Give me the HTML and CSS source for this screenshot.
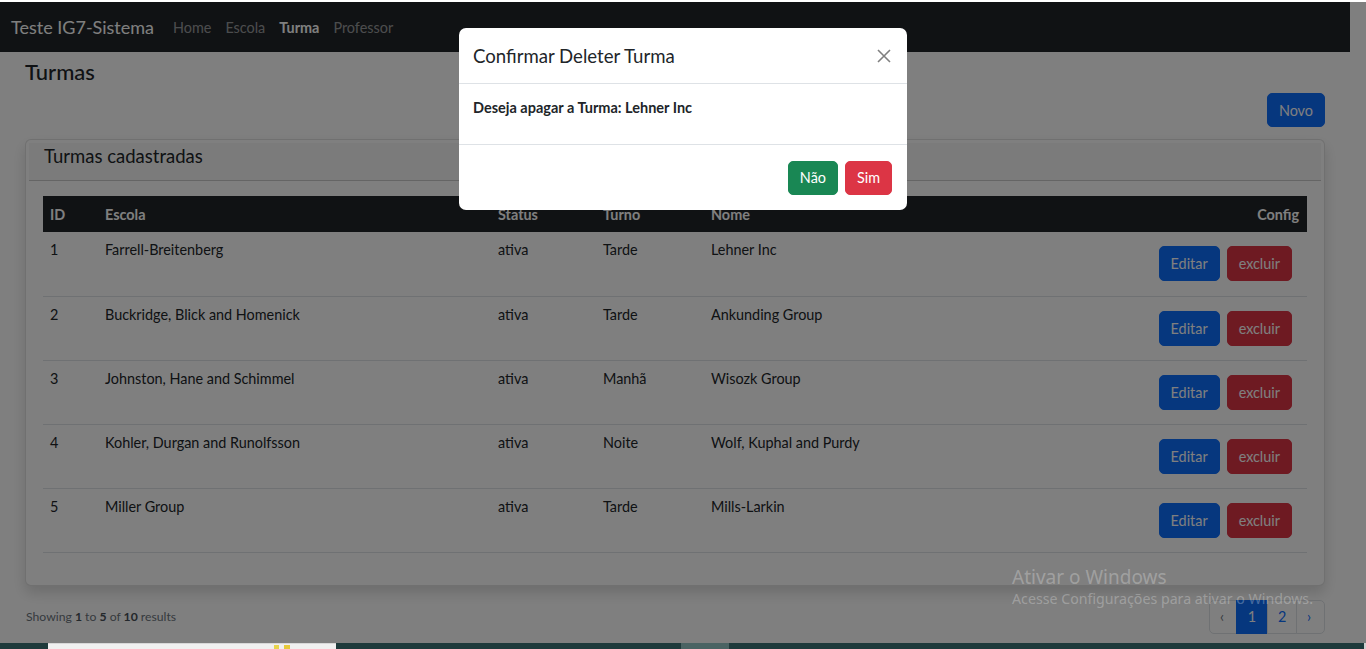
FILE: index.html
```html
<!DOCTYPE html>
<html lang="pt-BR">
<head>
<meta charset="utf-8">
<title>Teste IG7-Sistema</title>
<link rel="stylesheet" href="styles.css">
</head>
<body>
<div class="screen">
  <div class="chrome-top"></div>
  <div class="viewport">
    <div class="page">
      <nav class="navbar">
        <a class="brand" href="#">Teste IG7-Sistema</a>
        <ul class="nav">
          <li><a class="nav-link" href="#">Home</a></li>
          <li><a class="nav-link" href="#">Escola</a></li>
          <li><a class="nav-link active" href="#">Turma</a></li>
          <li><a class="nav-link" href="#">Professor</a></li>
        </ul>
      </nav>
      <main class="content">
        <h4 class="title">Turmas</h4>
        <div class="actions">
          <button class="btn btn-primary btn-novo">Novo</button>
        </div>
        <section class="card">
          <div class="card-header">Turmas cadastradas</div>
          <div class="card-body">
            <table class="table">
              <colgroup>
                <col class="c-id"><col class="c-escola"><col class="c-status"><col class="c-turno"><col class="c-nome"><col>
              </colgroup>
              <thead>
                <tr><th>ID</th><th>Escola</th><th>Status</th><th>Turno</th><th>Nome</th><th class="right">Config</th></tr>
              </thead>
              <tbody>
                <tr><td>1</td><td>Farrell-Breitenberg</td><td>ativa</td><td>Tarde</td><td>Lehner Inc</td><td class="right"><div class="cfg"><button class="btn btn-primary">Editar</button><button class="btn btn-danger">excluir</button></div></td></tr>
                <tr><td>2</td><td>Buckridge, Blick and Homenick</td><td>ativa</td><td>Tarde</td><td>Ankunding Group</td><td class="right"><div class="cfg"><button class="btn btn-primary">Editar</button><button class="btn btn-danger">excluir</button></div></td></tr>
                <tr><td>3</td><td>Johnston, Hane and Schimmel</td><td>ativa</td><td>Manhã</td><td>Wisozk Group</td><td class="right"><div class="cfg"><button class="btn btn-primary">Editar</button><button class="btn btn-danger">excluir</button></div></td></tr>
                <tr><td>4</td><td>Kohler, Durgan and Runolfsson</td><td>ativa</td><td>Noite</td><td>Wolf, Kuphal and Purdy</td><td class="right"><div class="cfg"><button class="btn btn-primary">Editar</button><button class="btn btn-danger">excluir</button></div></td></tr>
                <tr><td>5</td><td>Miller Group</td><td>ativa</td><td>Tarde</td><td>Mills-Larkin</td><td class="right"><div class="cfg"><button class="btn btn-primary">Editar</button><button class="btn btn-danger">excluir</button></div></td></tr>
              </tbody>
            </table>
          </div>
        </section>
        <div class="pager-row">
          <p class="showing">Showing <b>1</b> to <b>5</b> of <b>10</b> results</p>
          <ul class="pagination">
            <li class="page-item disabled"><span>&lsaquo;</span></li>
            <li class="page-item active"><span>1</span></li>
            <li class="page-item"><a href="#">2</a></li>
            <li class="page-item"><a href="#">&rsaquo;</a></li>
          </ul>
        </div>
      </main>
    </div>
    <div class="backdrop"></div>
    <div class="modal">
      <div class="modal-header">
        <h5 class="modal-title">Confirmar Deleter Turma</h5>
        <button class="btn-close" aria-label="Close">
          <svg width="14" height="14" viewBox="0 0 14 14"><path d="M1 1L13 13M13 1L1 13" stroke="#808080" stroke-width="1.6" fill="none"/></svg>
        </button>
      </div>
      <div class="modal-body">Deseja apagar a Turma: Lehner Inc</div>
      <div class="modal-footer">
        <button class="btn btn-success">Não</button>
        <button class="btn btn-danger">Sim</button>
      </div>
    </div>
  </div>
  <div class="taskbar">
    <div class="tb-gap"></div>
    <div class="tb-window"><span class="tb-dots"></span></div>
    <div class="tb-fill"></div>
    <div class="tb-active"></div>
    <div class="tb-fill2"></div>
  </div>
  <div class="watermark">
    <div class="wm-title">Ativar o Windows</div>
    <div class="wm-sub">Acesse Configurações para ativar o Windows.</div>
  </div>
</div>
</body>
</html>
```

FILE: styles.css
```css
* { box-sizing: border-box; }
html, body { margin: 0; padding: 0; }
body {
  font-family: Lato, "Noto Sans", "Liberation Sans", sans-serif;
  font-size: 14.4px;
  color: #212529;
  background: #fff;
  overflow: hidden;
}
.screen { position: relative; width: 1366px; height: 649px; overflow: hidden; }
.chrome-top { height: 2px; background: #fff; }
.viewport { position: relative; height: 641px; overflow: hidden; background: #fff; }
.page { width: 1350px; }

.navbar {
  height: 50px;
  background: #212529;
  display: flex;
  align-items: center;
  padding: 0 11px;
}
.brand { color: #fff; text-decoration: none; font-size: 18px; margin-right: 12px; }
.nav { list-style: none; margin: 0; padding: 0; display: flex; }
.nav-link { display: block; padding: 0 7px; color: rgba(255,255,255,.55); text-decoration: none; font-size: 14.4px; }
.nav-link.active { color: #fff; font-weight: 700; }

.content { padding: 0 25px; }
.title { margin: 7px 0 0; font-size: 22px; line-height: 26px; font-weight: 500; }
.actions { display: flex; justify-content: flex-end; margin-top: 8px; }

.btn {
  font-family: inherit;
  font-size: 14.4px;
  height: 35px;
  padding: 0 11px;
  border: 1px solid transparent;
  border-radius: 5px;
  color: #fff;
  cursor: pointer;
}
.btn-novo { height: 34px; }
.btn-primary { background: #0d6efd; border-color: #0d6efd; }
.btn-danger { background: #dc3545; border-color: #dc3545; }
.btn-success { background: #198754; border-color: #198754; }

.card {
  margin-top: 12px;
  border: 1px solid rgba(0,0,0,.12);
  border-radius: 6px;
  padding: 3px;
  background: #fff;
  box-shadow: 0 7px 14px rgba(0,0,0,.15);
}
.card-header {
  height: 38px;
  line-height: 26px;
  padding: 0 15px;
  font-size: 18.5px;
  background: rgba(0,0,0,.03);
  border-bottom: 1px solid rgba(0,0,0,.175);
}
.card-body { padding: 15px 14px; }

.table { width: 100%; border-collapse: collapse; table-layout: fixed; margin-bottom: 14px; }
.c-id { width: 55px; }
.c-escola { width: 393px; }
.c-status { width: 105px; }
.c-turno { width: 108px; }
.c-nome { width: 300px; }
.table th {
  background: #212529;
  color: #fff;
  text-align: left;
  font-weight: 700;
  height: 36px;
  padding: 1px 8px 0 7px;
  line-height: 35px;
}
.table td {
  vertical-align: top;
  padding: 7px;
  line-height: 22px;
  border-bottom: 1px solid #dee2e6;
  height: 64px;
}
.table .right { text-align: right; }
.cfg { display: flex; justify-content: flex-end; gap: 7px; padding: 7px 8px 7px 0; }

.pager-row { display: flex; justify-content: space-between; align-items: center; margin-top: 14px; height: 34px; }
.showing { margin: 0 0 0 1px; font-size: 12.2px; color: #6c757d; }
.showing b { font-weight: 700; color: #495057; }
.pagination { list-style: none; margin: 0; padding: 0; display: flex; }
.page-item span, .page-item a {
  display: block;
  height: 34px;
  line-height: 32px;
  padding: 0 10px;
  border: 1px solid #dee2e6;
  margin-left: -1px;
  color: #0d6efd;
  text-decoration: none;
  background: #fff;
  font-size: 14.4px;
}
.page-item:first-child span { border-radius: 5px 0 0 5px; margin-left: 0; width: 28px; }
.page-item:last-child a { border-radius: 0 5px 5px 0; width: 29px; }
.page-item.disabled span { color: #6c757d; }
.page-item.active span { background: #0d6efd; border-color: #0d6efd; color: #fff; width: 32px; text-align: center; }
.page-item:nth-child(3) a { width: 30px; }

.backdrop { position: absolute; inset: 0; background: rgba(0,0,0,.5); }
.modal {
  position: absolute;
  top: 26px;
  left: 459px;
  width: 448px;
  background: #fff;
  border-radius: 7px;
  overflow: hidden;
}
.modal-header {
  height: 56px;
  display: flex;
  align-items: center;
  justify-content: space-between;
  padding: 0 15px 0 14px;
  border-bottom: 1px solid #dee2e6;
}
.modal-title { margin: 0; font-size: 18.6px; font-weight: 400; }
.btn-close { background: none; border: 0; padding: 0; width: 14px; height: 14px; margin-right: 1px; display: flex; }
.modal-body { height: 61px; padding: 14px; font-weight: 700; line-height: 20px; font-size: 14.5px; border-bottom: 1px solid #dee2e6; }
.modal-footer { height: 65px; display: flex; justify-content: flex-end; align-items: center; gap: 7px; padding: 0 15px; }
.modal-footer .btn { height: 34px; }

.taskbar { display: flex; height: 6px; background: #1e3a3b; }
.tb-gap { width: 48px; }
.tb-window { width: 288px; background: #f0f0f0; border-top: 1px solid #d8d8d8; position: relative; }
.tb-dots { position: absolute; left: 222px; top: 1px; width: 26px; height: 5px; background: linear-gradient(90deg, transparent 0 4px, #e8d44d 4px 9px, transparent 9px 14px, #e6c93a 14px 20px, transparent 20px); }
.tb-fill { width: 345px; }
.tb-active { width: 48px; background: #4a6363; }
.tb-fill2 { flex: 1; border-right: 2px solid #d0d0d0; }

.watermark { position: absolute; left: 1012px; top: 565px; color: rgba(255,255,255,.27); pointer-events: none; font-family: "Noto Sans", Lato, sans-serif; }
.wm-title { font-size: 19px; line-height: 24px; }
.wm-sub { font-size: 14.2px; line-height: 20px; }
```
